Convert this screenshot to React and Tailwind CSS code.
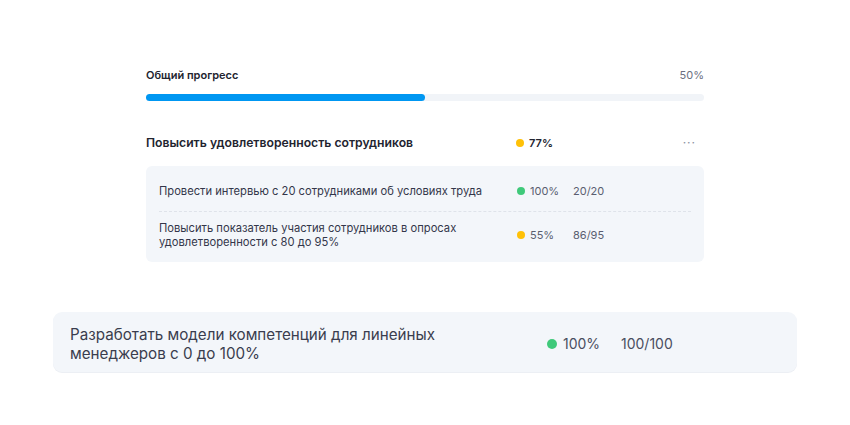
const subtasks = [
  { title: "Провести интервью с 20 сотрудниками об условиях труда", pct: "100%", value: "20/20", color: "bg-[#3fc97a]" },
  { title: "Повысить показатель участия сотрудников в опросах удовлетворенности с 80 до 95%", pct: "55%", value: "86/95", color: "bg-[#ffc107]" },
];

export default function App() {
  return (
    <div className="w-[850px] h-[425px] bg-white text-[#2b2d3a] font-['Inter','Noto_Sans',sans-serif]">
      <div className="pt-[67px] pl-[146px] w-[704px]">
        {/* общий прогресс */}
        <div className="flex items-center justify-between h-[16px]">
          <span className="text-[11px] font-semibold text-[#22242f]">Общий прогресс</span>
          <span className="text-[11px] text-[#6b6f80]">50%</span>
        </div>
        <div className="mt-[11px] h-[7px] rounded-full bg-[#f1f4f8]">
          <div className="h-full rounded-full bg-[#0097f2]" style={{ width: "50%" }} />
        </div>

        {/* цель */}
        <div className="mt-[33px] flex items-center h-[18px]">
          <span className="w-[370px] text-[12.2px] font-semibold text-[#22242f]">Повысить удовлетворенность сотрудников</span>
          <span className="w-[8px] h-[8px] rounded-full bg-[#ffc107]" />
          <span className="ml-[5px] text-[11px] font-semibold text-[#22242f]">77%</span>
          <span className="ml-auto mr-[8px] text-[#8a8ea0] text-[12px] leading-none tracking-[1px]">···</span>
        </div>

        <div className="mt-[14px] rounded-[6px] bg-[#f3f6fa] px-[13px]">
          {subtasks.map((s, i) => (
            <div
              key={i}
              className={`flex items-center ${i === 0 ? "h-[46px] pt-[5px] border-b border-dashed border-[#dfe3ea]" : "h-[50px] pb-[4px]"}`}
            >
              <span className="w-[358px] text-[11.2px] leading-[14px] text-[#33364a]">{s.title}</span>
              <span className={`w-[8px] h-[8px] rounded-full ${s.color}`} />
              <span className="ml-[5px] w-[43px] text-[11px] text-[#5a5e70]">{s.pct}</span>
              <span className="text-[11px] text-[#5a5e70]">{s.value}</span>
            </div>
          ))}
        </div>
      </div>

      {/* нижняя карточка */}
      <div className="mt-[50px] ml-[53px] w-[744px] h-[60px] rounded-[9px] bg-[#f3f6fa] shadow-[0_1px_0_#eceff4] flex items-center pl-[17px] pt-[3px]">
        <span className="w-[477px] text-[15.2px] leading-[19px] text-[#3a3d4e]">
          Разработать модели компетенций для линейных
          <br />
          менеджеров с 0 до 100%
        </span>
        <span className="w-[10px] h-[10px] rounded-full bg-[#3fc97a]" />
        <span className="ml-[6px] w-[58px] text-[14px] text-[#4a4e60]">100%</span>
        <span className="text-[14px] text-[#4a4e60]">100/100</span>
      </div>
    </div>
  );
}
